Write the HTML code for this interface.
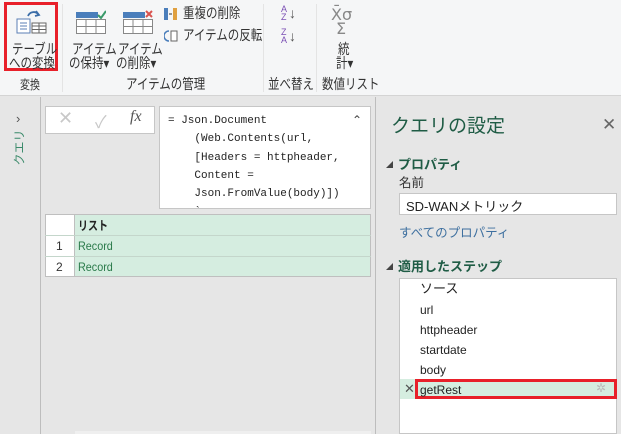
<!DOCTYPE html>
<html><head><meta charset="utf-8"><style>
*{margin:0;padding:0;box-sizing:border-box}
body{width:621px;height:434px;overflow:hidden;background:#e6e6e6;font-family:"Liberation Sans","Noto Sans CJK JP",sans-serif;position:relative;color:#333}
.a{position:absolute}
.rib{left:0;top:0;width:621px;height:96px;background:#f5f6f7;border-bottom:1px solid #d4d4d4}
.t{font-size:12.5px;color:#333;white-space:nowrap;transform:scaleX(.8);transform-origin:0 0;line-height:14px}
.b{font-size:14px;transform:scaleX(.82)}
.sep{width:1px;background:#e4e4e4;top:4px;height:88px}
.mono{font-family:"Liberation Mono","Noto Sans CJK JP",monospace;font-size:11px;color:#222}
.step{left:420px;font-size:12px;color:#222;line-height:14px}
</style></head><body>
<div class="a rib"></div>
<div class="a" style="left:4px;top:2px;width:54px;height:69px;border:3px solid #e8202a"></div>
<svg class="a" style="left:14px;top:8px" width="34" height="26" viewBox="0 0 34 26">
<path d="M14 8 a6 6 0 0 1 10 -2" stroke="#3c6ea8" stroke-width="1.8" fill="none"/><path d="M22 3 l3 4 l-4 1" stroke="#3c6ea8" stroke-width="1.8" fill="none"/>
<rect x="3" y="11" width="13" height="14" fill="#fff" stroke="#5b7fb4"/><path d="M6 15h7M6 18h7M6 21h7" stroke="#5b7fb4"/>
<rect x="18" y="15" width="14" height="10" fill="#fff" stroke="#666"/><path d="M18 18h14M25 15v10M18 21.5h14" stroke="#666"/></svg>
<div class="a t b" style="left:12px;top:42px">テーブル</div>
<div class="a t b" style="left:9px;top:56px">への変換</div>
<div class="a t" style="left:20px;top:78px">変換</div>
<div class="a sep" style="left:62px"></div>
<svg class="a" style="left:76px;top:10px" width="30" height="24"><rect x="0" y="2" width="22" height="6" fill="#4a7ebb"/><path d="M22 5 l3 3 l5 -7" stroke="#3a9a6a" stroke-width="2" fill="none"/><rect x="0.5" y="9.5" width="29" height="14" fill="#fff" stroke="#888"/><path d="M0 16.5h30M10 9v15M20 9v15" stroke="#888"/></svg>
<svg class="a" style="left:123px;top:10px" width="30" height="24"><rect x="0" y="2" width="22" height="6" fill="#4a7ebb"/><path d="M23 1l6 6M29 1l-6 6" stroke="#d9534f" stroke-width="2"/><rect x="0.5" y="9.5" width="29" height="14" fill="#fff" stroke="#888"/><path d="M0 16.5h30M10 9v15M20 9v15" stroke="#888"/></svg>
<div class="a t b" style="left:72px;top:42px">アイテム</div>
<div class="a t b" style="left:69px;top:56px">の保持▾</div>
<div class="a t b" style="left:118px;top:42px">アイテム</div>
<div class="a t b" style="left:116px;top:56px">の削除▾</div>
<svg class="a" style="left:164px;top:8px" width="14" height="12"><rect x="0" y="0" width="4" height="12" fill="#4a7ebb"/><rect x="9" y="0" width="4" height="12" fill="#e0a040"/><path d="M5 6h3" stroke="#333"/></svg>
<div class="a t b" style="left:183px;top:6px">重複の削除</div>
<svg class="a" style="left:164px;top:29px" width="14" height="14"><path d="M5 2 a5 5 0 0 0 0 10" stroke="#4a7ebb" stroke-width="1.5" fill="none"/><rect x="7" y="2" width="6" height="10" fill="#fff" stroke="#666"/></svg>
<div class="a t b" style="left:183px;top:28px">アイテムの反転</div>
<div class="a t b" style="left:126px;top:77px">アイテムの管理</div>
<div class="a sep" style="left:263px"></div>
<div class="a" style="left:281px;top:5px;font-size:9px;line-height:8px;color:#7b4fb4">A<br>Z</div>
<div class="a" style="left:289px;top:5px;font-size:14px;color:#555">↓</div>
<div class="a" style="left:281px;top:28px;font-size:9px;line-height:8px;color:#7b4fb4">Z<br>A</div>
<div class="a" style="left:289px;top:28px;font-size:14px;color:#555">↓</div>
<div class="a t b" style="left:268px;top:77px">並べ替え</div>
<div class="a sep" style="left:316px"></div>
<div class="a" style="left:331px;top:8px;font-size:16px;color:#888;line-height:14px;font-family:'DejaVu Sans',sans-serif">X̄σ</div>
<div class="a" style="left:336px;top:22px;font-size:16px;color:#888;line-height:14px;font-family:'DejaVu Sans',sans-serif">Σ</div>
<div class="a t b" style="left:338px;top:42px">統</div>
<div class="a t b" style="left:336px;top:56px">計▾</div>
<div class="a t b" style="left:322px;top:77px">数値リスト</div>
<div class="a" style="left:40px;top:97px;width:1px;height:337px;background:#bdbdbd"></div>
<div class="a" style="left:16px;top:111px;font-size:13px;color:#555">›</div>
<div class="a" style="left:-1px;top:139px;width:40px;text-align:center;font-size:12px;color:#3a8a6a;transform:rotate(-90deg)">クエリ</div>
<div class="a" style="left:45px;top:106px;width:110px;height:28px;background:#fff;border:1px solid #c6c6c6"></div>
<div class="a" style="left:58px;top:108px;font-size:18px;color:#c8c8c8">✕</div>
<div class="a" style="left:95px;top:108px;font-size:17px;color:#c8c8c8">✓</div>
<div class="a" style="left:130px;top:108px;font-size:16px;font-style:italic;font-family:'Liberation Serif',serif;color:#555">fx</div>
<div class="a" style="left:159px;top:106px;width:212px;height:103px;background:#fff;border:1px solid #c6c6c6;overflow:hidden">
<div class="mono" style="position:absolute;left:8px;top:5px;line-height:18.3px;white-space:pre">= Json.Document
    (Web.Contents(url,
    [Headers = httpheader,
    Content =
    Json.FromValue(body)])
    `</div>
<div style="position:absolute;right:8px;top:6px;font-size:12px;color:#444">⌃</div></div>
<div class="a" style="left:45px;top:214px;width:326px;height:63px;background:#d5ede0;border:1px solid #bfbfbf"></div>
<div class="a" style="left:45px;top:214px;width:30px;height:63px;background:#fff;border:1px solid #bfbfbf"></div>
<div class="a" style="left:45px;top:235px;width:326px;height:1px;background:#c4d6cb"></div>
<div class="a" style="left:45px;top:256px;width:326px;height:1px;background:#c4d6cb"></div>
<div class="a t" style="left:78px;top:219px;font-weight:bold;color:#222">リスト</div>
<div class="a" style="left:56px;top:239px;font-size:12px">1</div>
<div class="a" style="left:56px;top:260px;font-size:12px">2</div>
<div class="a" style="left:78px;top:239px;font-size:12px;color:#2a7a4a;transform:scaleX(.9);transform-origin:0 0">Record</div>
<div class="a" style="left:78px;top:260px;font-size:12px;color:#2a7a4a;transform:scaleX(.9);transform-origin:0 0">Record</div>
<div class="a" style="left:75px;top:431px;width:296px;height:3px;background:#efefef"></div>
<div class="a" style="left:375px;top:97px;width:1px;height:337px;background:#bdbdbd"></div>
<div class="a" style="left:391px;top:111px;font-size:19px;color:#1f5c45">クエリの設定</div>
<div class="a" style="left:602px;top:115px;font-size:17px;color:#666">✕</div>
<div class="a" style="left:386px;top:160px;font-size:7px;color:#444">◢</div>
<div class="a" style="left:398px;top:154px;font-size:13px;font-weight:bold;color:#1f5c45">プロパティ</div>
<div class="a" style="left:399px;top:177px;font-size:12.5px;line-height:13px">名前</div>
<div class="a" style="left:399px;top:193px;width:218px;height:22px;background:#fff;border:1px solid #c6c6c6;font-size:13px;padding:2px 0 0 6px;color:#222">SD-WANメトリック</div>
<div class="a" style="left:399px;top:222px;font-size:12.5px;color:#3d6f9f">すべてのプロパティ</div>
<div class="a" style="left:386px;top:262px;font-size:7px;color:#444">◢</div>
<div class="a" style="left:398px;top:256px;font-size:13px;font-weight:bold;color:#1f5c45">適用したステップ</div>
<div class="a" style="left:399px;top:278px;width:218px;height:156px;background:#fff;border:1px solid #c6c6c6"></div>
<div class="a step" style="top:282px;font-size:13px">ソース</div>
<div class="a step" style="top:303px">url</div>
<div class="a step" style="top:323px">httpheader</div>
<div class="a step" style="top:343px">startdate</div>
<div class="a step" style="top:363px">body</div>
<div class="a" style="left:400px;top:379px;width:216px;height:20px;background:#d5ede0"></div>
<div class="a" style="left:415px;top:379px;width:202px;height:20px;border:3px solid #e8202a"></div>
<div class="a" style="left:404px;top:381px;font-size:13px;color:#555">✕</div>
<div class="a step" style="top:383px">getRest</div>
<div class="a" style="left:596px;top:381px;font-size:12px;color:#bbb">✲</div>
</body></html>
